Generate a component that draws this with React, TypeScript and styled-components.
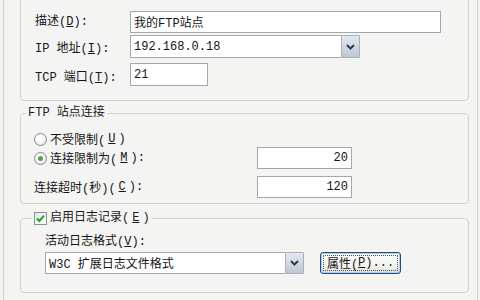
import React from 'react';
import styled, { createGlobalStyle } from 'styled-components';

const GlobalStyle = createGlobalStyle`
  html, body {
    margin: 0;
    padding: 0;
    background: #f4f4f2;
  }
  body {
    font-family: "Liberation Mono", "Noto Sans CJK SC", monospace;
    font-size: 12px;
    color: #151515;
  }
`;

const Page = styled.div`
  width: 480px;
  height: 300px;
  overflow: hidden;
  box-sizing: border-box;
  padding: 0 2px 0 3px;
`;

const Panel = styled.div`
  height: 100%;
  box-sizing: border-box;
  border-left: 1px solid #cfcfcb;
  border-right: 1px solid #cfcfcb;
  padding: 0 8px 0 16px;
  display: flex;
  flex-direction: column;
`;

const GroupBase = styled.fieldset`
  margin: 0;
  min-width: 0;
  border: 1px solid #d2d2cd;
  border-radius: 4px;
`;

const SiteGroup = styled(GroupBase)`
  margin-top: -10px;
  padding: 20px 0 11px 14px;
  display: grid;
  grid-template-columns: 95px 1fr;
  grid-auto-rows: auto;
  row-gap: 0;
`;

const ConnectionGroup = styled(GroupBase)`
  margin-top: 5px;
  padding: 11px 0 5px 13px;
  display: grid;
  grid-template-columns: 223px 95px;
`;

const LogGroup = styled(GroupBase)`
  margin-top: 7px;
  padding: 10px 0 18px 24px;
  display: flex;
  flex-direction: column;
`;

const Legend = styled.legend<{ $offset: number }>`
  padding: 0 2px;
  margin-left: ${p => p.$offset}px;
  line-height: 14px;
  height: 14px;
  display: flex;
  align-items: center;
  gap: 3px;
  color: #1a1a1a;
`;

const Label = styled.span`
  display: flex;
  align-items: center;
  line-height: 14px;
  white-space: nowrap;
`;

const Field = styled.input<{ $width: number; $align?: 'left' | 'right' }>`
  box-sizing: border-box;
  width: ${p => p.$width}px;
  height: 22px;
  margin: 0;
  padding: 0 3px;
  border: 1px solid #a7a7a7;
  background: #fff;
  font: inherit;
  color: #151515;
  text-align: ${p => p.$align || 'left'};
  outline: none;
`;

const Combo = styled.div<{ $width: number }>`
  box-sizing: border-box;
  width: ${p => p.$width}px;
  height: 22px;
  display: flex;
`;

const ComboText = styled.div`
  flex: 1;
  box-sizing: border-box;
  border: 1px solid #a7a7a7;
  border-right: none;
  background: #fff;
  padding: 0 3px;
  display: flex;
  align-items: center;
  white-space: nowrap;
`;

const ArrowButton = styled.div`
  width: 19px;
  box-sizing: border-box;
  border: 1px solid #a9b0bc;
  border-radius: 1px;
  background: linear-gradient(#e4e8ef, #bfc7d4);
  display: flex;
  align-items: center;
  justify-content: center;
`;

const SiteRow = styled.div<{ $gap: number }>`
  display: contents;
  & > * {
    margin-top: ${p => p.$gap}px;
  }
`;

const RadioRow = styled.label<{ $height: number; $gap?: number }>`
  display: flex;
  align-items: center;
  gap: 3px;
  height: ${p => p.$height}px;
  margin-top: ${p => p.$gap || 0}px;
  white-space: nowrap;
`;

const Radio = styled.span<{ $checked?: boolean }>`
  width: 13px;
  height: 13px;
  box-sizing: border-box;
  border-radius: 50%;
  border: 1px solid #7e8a96;
  background: radial-gradient(circle at 40% 35%, #ffffff 30%, #dedfd8 100%);
  display: inline-flex;
  align-items: center;
  justify-content: center;

  &::after {
    content: '';
    width: 5px;
    height: 5px;
    border-radius: 50%;
    background: ${p => (p.$checked ? '#52a552' : 'transparent')};
  }
`;

const Check = styled.span`
  width: 13px;
  height: 13px;
  box-sizing: border-box;
  border: 1px solid #7f949c;
  background: linear-gradient(135deg, #e6e6e0, #ffffff);
  display: inline-flex;
  align-items: center;
  justify-content: center;
`;

const FieldCell = styled.div<{ $gap?: number }>`
  display: flex;
  align-items: center;
  margin-top: ${p => p.$gap || 0}px;
`;

const FormatLabel = styled(Label)`
  height: 14px;
`;

const FormatRow = styled.div`
  display: flex;
  gap: 16px;
  margin-top: 3px;
`;

const PushButton = styled.button`
  width: 81px;
  height: 22px;
  box-sizing: border-box;
  margin: 0;
  padding: 2px;
  border: 1px solid #1d4e86;
  border-radius: 3px;
  background: linear-gradient(#ffffff, #f1f1ec 70%, #dcdcd4);
  box-shadow: inset 0 0 0 1px #b4cbee;
  font: inherit;
  color: #151515;
  display: flex;
`;

const FocusRing = styled.span`
  flex: 1;
  border: 1px dotted #555;
  display: flex;
  align-items: center;
  justify-content: center;
  white-space: nowrap;
`;

const ChevronDown: React.FC = () => (
  <svg width="9" height="6" viewBox="0 0 9 6" aria-hidden="true">
    <path d="M1 1 L4.5 4.5 L8 1" fill="none" stroke="#2f3b52" strokeWidth="2" />
  </svg>
);

const CheckMark: React.FC = () => (
  <svg width="9" height="9" viewBox="0 0 9 9" aria-hidden="true">
    <path d="M1 4.5 L3.4 7 L8 1.6" fill="none" stroke="#22a022" strokeWidth="2" />
  </svg>
);

const Key: React.FC<{ k: string }> = ({ k }) => (
  <>
    (<u>{k}</u>)
  </>
);

const App: React.FC = () => {
  return (
    <>
      <GlobalStyle />
      <Page>
        <Panel>
          <SiteGroup>
            <SiteRow $gap={0}>
              <Label style={{ height: 22 }}>描述<Key k="D" />:</Label>
              <FieldCell>
                <Field $width={311} defaultValue="我的FTP站点" />
              </FieldCell>
            </SiteRow>
            <SiteRow $gap={4}>
              <Label style={{ height: 23 }}>IP 地址<Key k="I" />:</Label>
              <FieldCell>
                <Combo $width={230} style={{ height: 23 }}>
                  <ComboText>192.168.0.18</ComboText>
                  <ArrowButton>
                    <ChevronDown />
                  </ArrowButton>
                </Combo>
              </FieldCell>
            </SiteRow>
            <SiteRow $gap={6}>
              <Label style={{ height: 23 }}>TCP 端口<Key k="T" />:</Label>
              <FieldCell>
                <Field $width={78} style={{ height: 23 }} defaultValue="21" />
              </FieldCell>
            </SiteRow>
          </SiteGroup>

          <ConnectionGroup>
            <Legend $offset={-8}>FTP 站点连接</Legend>
            <RadioRow $height={16} style={{ gridColumn: '1 / 3' }}>
              <Radio />
              不受限制<Key k="U" />
            </RadioRow>
            <RadioRow $height={22}>
              <Radio $checked />
              连接限制为<Key k="M" />:
            </RadioRow>
            <FieldCell>
              <Field $width={95} $align="right" defaultValue="20" />
            </FieldCell>
            <RadioRow $height={22} $gap={7}>
              连接超时(秒)<Key k="C" />:
            </RadioRow>
            <FieldCell $gap={7}>
              <Field $width={95} $align="right" defaultValue="120" />
            </FieldCell>
          </ConnectionGroup>

          <LogGroup>
            <Legend $offset={-13}>
              <Check>
                <CheckMark />
              </Check>
              启用日志记录<Key k="E" />
            </Legend>
            <FormatLabel>活动日志格式<Key k="V" />:</FormatLabel>
            <FormatRow>
              <Combo $width={259}>
                <ComboText>W3C 扩展日志文件格式</ComboText>
                <ArrowButton>
                  <ChevronDown />
                </ArrowButton>
              </Combo>
              <PushButton type="button">
                <FocusRing>属性<Key k="P" />...</FocusRing>
              </PushButton>
            </FormatRow>
          </LogGroup>
        </Panel>
      </Page>
    </>
  );
};

export default App;
